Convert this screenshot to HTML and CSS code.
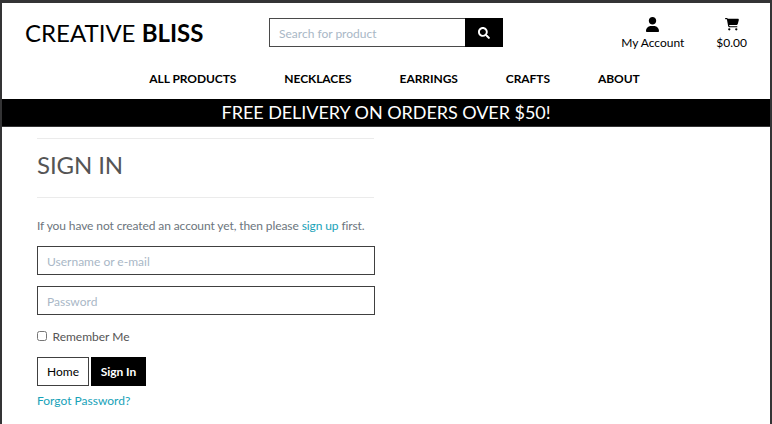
FILE: index.html
```html
<!DOCTYPE html>
<html lang="en">
<head>
<meta charset="utf-8">
<title>Creative Bliss</title>
<link rel="stylesheet" href="styles.css">
</head>
<body>
<header class="header">
  <div class="topbar">
    <a class="brand"><span class="brand-text">CREATIVE <strong>BLISS</strong></span></a>
    <form class="search">
      <input class="search-input" type="text" placeholder="Search for product">
      <button class="search-button" type="button" aria-label="Search"><svg viewBox="0 0 512 512" width="12" height="12"><path fill="currentColor" d="M505 442.700 405.300 343c-4.500-4.500-10.600-7-17-7H372c27.600-35.300 44-79.700 44-128C416 93.100 322.900 0 208 0S0 93.100 0 208s93.100 208 208 208c48.300 0 92.700-16.400 128-44v16.300c0 6.400 2.500 12.500 7 17l99.700 99.700c9.400 9.400 24.600 9.400 33.900 0l28.300-28.300c9.400-9.400 9.400-24.600.1-34zM208 336c-70.700 0-128-57.200-128-128 0-70.700 57.200-128 128-128 70.700 0 128 57.200 128 128 0 70.700-57.200 128-128 128z"/></svg></button>
    </form>
    <div class="tools">
      <a class="tool account"><svg viewBox="0 0 448 512" width="13" height="15"><path fill="currentColor" d="M224 256c70.700 0 128-57.300 128-128S294.700 0 224 0 96 57.300 96 128s57.300 128 128 128zm50.700 48H173.300C77.600 304 0 381.600 0 477.300 0 496.500 15.500 512 34.700 512h378.600c19.200 0 34.700-15.500 34.700-34.700C448 381.600 370.400 304 274.700 304z"/></svg><span>My Account</span></a>
      <a class="tool cart"><svg viewBox="0 0 576 512" width="14" height="12.500"><path fill="currentColor" d="M24 0h46c22 0 41 13 50 32h411c26 0 45 25 38 50l-41 152c-8 32-37 54-69 54H171l5 29c2 11 12 19 24 19h288c13 0 24 11 24 24s-11 24-24 24H200c-35 0-64-25-71-59L77 55c0-4-4-7-8-7H24a24 24 0 0 1 0-48zM128 464a48 48 0 1 1 96 0 48 48 0 1 1-96 0zM464 416a48 48 0 1 1 0 96 48 48 0 1 1 0-96z"/></svg><span>$0.00</span></a>
    </div>
  </div>
  <nav class="nav">
    <a>ALL PRODUCTS</a><a>NECKLACES</a><a>EARRINGS</a><a>CRAFTS</a><a>ABOUT</a>
  </nav>
</header>
<div class="banner"><span>FREE DELIVERY ON ORDERS OVER $50!</span></div>
<main class="signin">
  <h1 class="title"><span>SIGN IN</span></h1>
  <p class="hint"><span>If you have not created an account yet, then please <a class="link">sign up</a> first.</span></p>
  <input class="field" type="text" placeholder="Username or e-mail">
  <input class="field" type="password" placeholder="Password">
  <label class="remember"><input class="check" type="checkbox"><span>Remember Me</span></label>
  <div class="actions">
    <button class="button home" type="button">Home</button>
    <button class="button primary" type="button">Sign In</button>
  </div>
  <a class="link forgot">Forgot Password?</a>
</main>
</body>
</html>
```
FILE: styles.css
```css
* { box-sizing: border-box; }
body {
  margin: 0;
  height: 424px;
  overflow: hidden;
  border: solid #343435;
  border-width: 3px 2px 0;
  background: #fff;
  color: #000;
  font: 12px/18px Lato, sans-serif;
}
input, button { font: inherit; border-radius: 0; margin: 0; }
svg { display: block; }
.header { height: 96px; }
.topbar { display: flex; height: 62px; }
.brand { width: 267px; padding: 12px 0 0 23px; font-size: 24px; line-height: 36px; white-space: nowrap; }
.search { display: flex; width: 234px; height: 29px; margin-top: 15px; }
.search-input { width: 196px; padding: 2px 9px 0; border: 1px solid #4a4a4a; border-right: 0; outline: 0; background: #fff; }
.search-input::placeholder, .field::placeholder { color: #a9b7c6; opacity: 1; }
.search-button { display: grid; place-items: center; width: 38px; padding: 1px 0 0; border: 0; background: #000; color: #fff; }
.tools { display: flex; flex: 1; justify-content: flex-end; gap: 32px; padding: 14px 23px 0 0; }
.tool { display: flex; flex-direction: column; align-items: center; }
.tool span { margin-top: 2px; }
.cart svg { margin: 1px 0 1.5px; }
.nav { display: flex; justify-content: center; gap: 48px; padding: 5px 0 0 17px; font-weight: 700; letter-spacing: -.07px; }
.banner { height: 28px; border-bottom: 1px solid #343435; background: #000; color: #fff; font-size: 18px; line-height: 27px; letter-spacing: -.05px; text-align: center; }
.signin { width: 337px; margin: 11px 0 0 35px; color: #6c757d; }
.title { height: 60px; margin: 0 0 19px; border: solid #ebebeb; border-width: 1px 0; color: #555; font-size: 24px; line-height: 52px; font-weight: 400; letter-spacing: -.1px; }
.hint { margin: 0 0 11px; white-space: nowrap; letter-spacing: -.1px; }
.link { color: #17a2b8; }
.field { display: block; width: 338px; height: 29px; margin-bottom: 11px; padding: 1px 9px 0; border: 1px solid #404040; outline: 0; }
.remember { display: flex; align-items: center; gap: 5.5px; height: 20px; padding-top: 1px; color: #555; }
.check { width: 10px; height: 10px; margin-top: -2px; }
.actions { display: flex; gap: 2px; margin: 11px 0 6px; }
.button { height: 29px; padding: 0; border: 1px solid #404040; background: #fff; color: #000; }
.home { width: 52px; }
.primary { width: 55px; border-color: #000; background: #000; color: #fff; font-weight: 700; letter-spacing: -.05px; }
.forgot { display: block; }
```
